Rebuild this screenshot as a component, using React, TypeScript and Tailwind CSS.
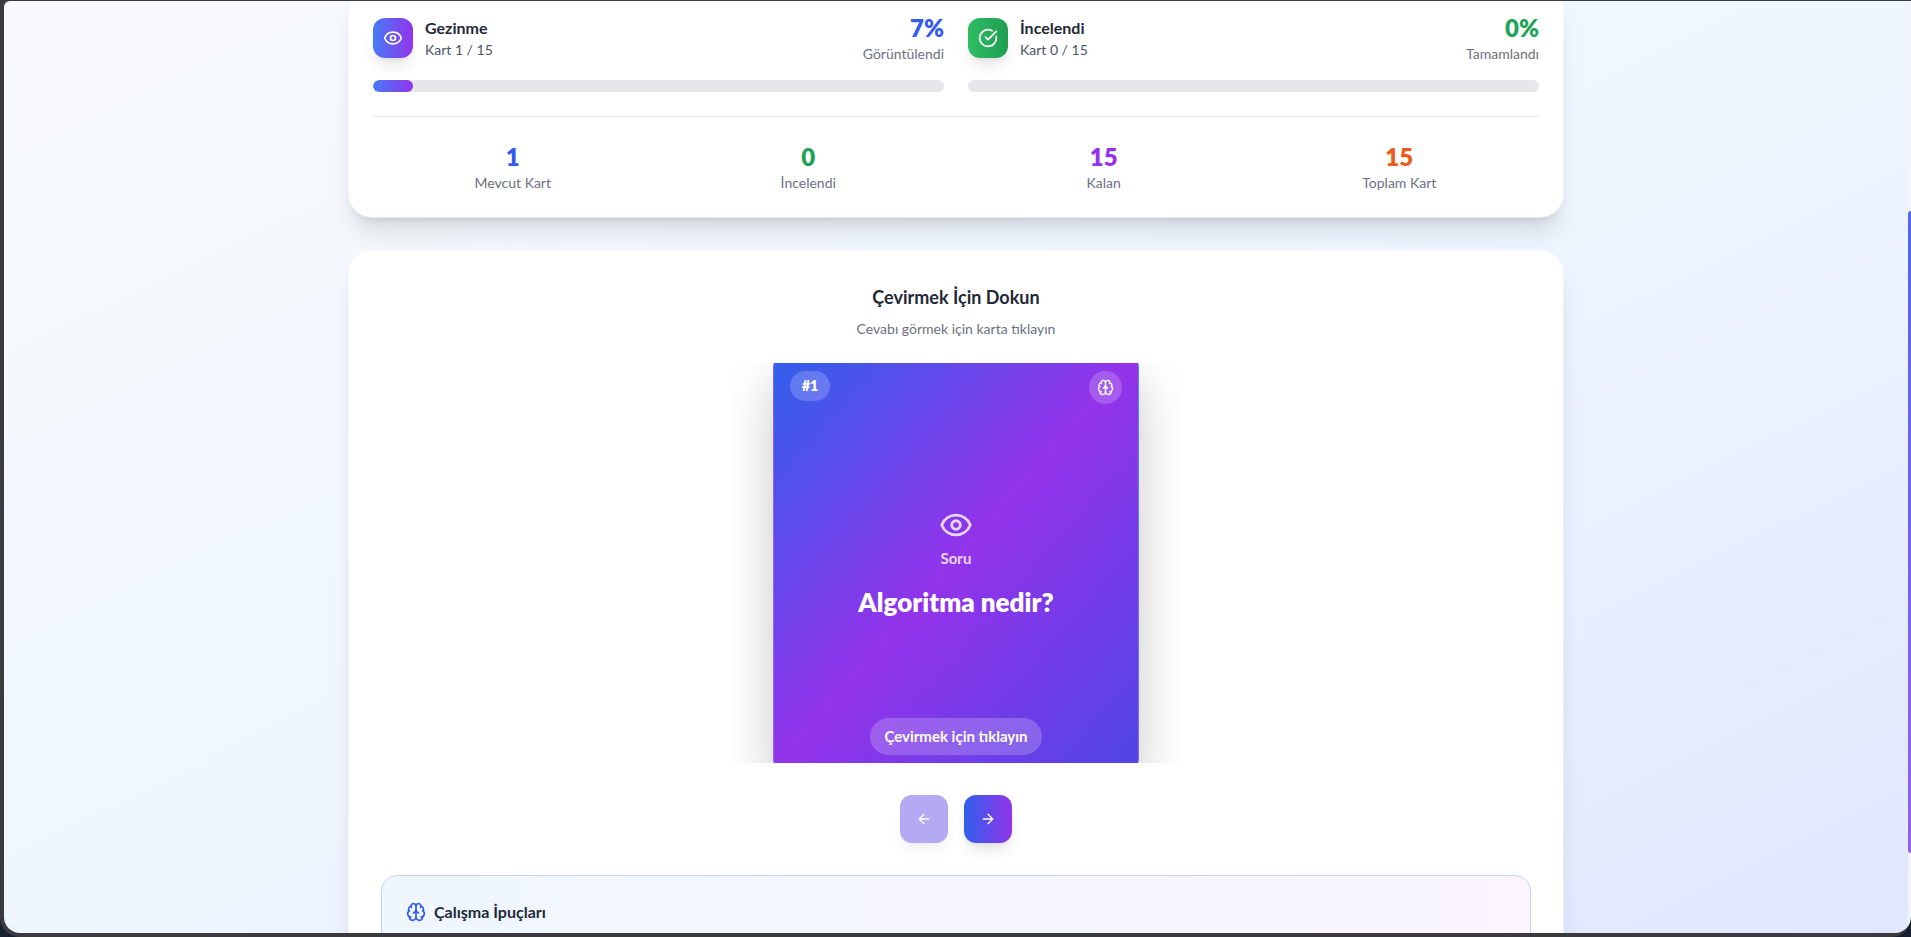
import { useState } from 'react'
import { ArrowLeft, ArrowRight, Brain, CircleCheckBig, Eye } from 'lucide-react'

const totalCards = 15

const progress = [
  {
    icon: Eye,
    title: 'Gezinme',
    current: 1,
    label: 'Görüntülendi',
    iconClass: 'bg-linear-to-r/srgb from-[#457bf5] to-[#9333ea]',
    barClass: 'bg-linear-to-r/srgb from-[#457bf5] to-[#9333ea]',
    valueClass: 'text-[#345bee]'
  },
  {
    icon: CircleCheckBig,
    title: 'İncelendi',
    current: 0,
    label: 'Tamamlandı',
    iconClass: 'bg-linear-to-r/srgb from-[#2ebd63] to-[#1f9d52]',
    barClass: 'bg-linear-to-r/srgb from-[#2ebd63] to-[#1f9d52]',
    valueClass: 'text-[#1fa457]'
  }
]

const stats = [
  { value: 1, name: 'Mevcut Kart', color: 'text-[#345bee]' },
  { value: 0, name: 'İncelendi', color: 'text-[#1fa457]' },
  { value: 15, name: 'Kalan', color: 'text-[#9333ea]' },
  { value: 15, name: 'Toplam Kart', color: 'text-[#ea5c1c]' }
]

function ProgressCard() {
  return (
    <section className="rounded-3xl border border-white/50 bg-white bg-clip-padding p-6 shadow-xl">
      <div className="grid grid-cols-2 gap-6">
        {progress.map(item => {
          const percent = Math.round((item.current / totalCards) * 100)
          return (
            <div key={item.title}>
              <div className="mb-4 flex items-center justify-between">
                <div className="flex items-center gap-3">
                  <div className={`flex h-10 w-10 items-center justify-center rounded-xl text-white shadow-lg ${item.iconClass}`}>
                    <item.icon size={20} />
                  </div>
                  <div>
                    <h3 className="font-bold text-[#1f2937]">{item.title}</h3>
                    <p className="text-sm text-[#4b5563]">Kart {item.current} / {totalCards}</p>
                  </div>
                </div>
                <div className="text-right">
                  <div className={`text-2xl font-extrabold ${item.valueClass}`}>{percent}%</div>
                  <div className="text-sm text-[#6b7280]">{item.label}</div>
                </div>
              </div>
              <div className="h-3 overflow-hidden rounded-full bg-[#e5e7eb]">
                <div className={`h-full rounded-full ${item.barClass}`} style={{ width: `${percent}%` }} />
              </div>
            </div>
          )
        })}
      </div>

      <div className="mt-6 grid grid-cols-4 gap-4 border-t border-[#e5e7eb] pt-6 text-center">
        {stats.map(stat => (
          <div key={stat.name}>
            <div className={`text-2xl font-extrabold ${stat.color}`}>{stat.value}</div>
            <div className="text-sm text-[#6b7280]">{stat.name}</div>
          </div>
        ))}
      </div>
    </section>
  )
}

function FlipCard({ onFlip }: { onFlip: () => void }) {
  return (
    <div className="mx-auto mt-6 flex h-[400px] w-full max-w-md items-center justify-center overflow-hidden">
      <button
        type="button"
        onClick={onFlip}
        className="flex h-[416px] w-[366px] shrink-0 rounded-xl bg-linear-to-bl/srgb from-[#4f86f7] via-[#8a5ff0] to-[#9a5cf0] px-px text-white shadow-[0_25px_50px_rgba(0,0,0,0.22)]"
      >
        <span className="relative flex h-full w-full flex-col items-center justify-center rounded-xl bg-linear-to-br/srgb from-[#2f60eb] via-[#9333ea] to-[#4f46e5]">
          <span className="absolute top-4 left-4 rounded-full bg-white/20 px-3 py-1 text-sm leading-[22px] font-extrabold">#1</span>
          <span className="absolute top-4 right-4 rounded-full bg-white/20 p-2">
            <Brain size={17} />
          </span>
          <Eye size={34} className="text-white/80" />
          <span className="mt-1 text-[15px] leading-6 font-bold text-white/80">Soru</span>
          <span className="mt-4 text-[26px] leading-8 font-extrabold">Algoritma nedir?</span>
          <span className="absolute bottom-4 rounded-full bg-white/20 px-3.5 py-2 text-[15px] leading-[21px] font-bold">
            Çevirmek için tıklayın
          </span>
        </span>
      </button>
    </div>
  )
}

export default function App() {
  const [flipped, setFlipped] = useState(false)

  return (
    <div className="h-screen overflow-hidden bg-[#17202f] font-['Lato','Noto_Sans',sans-serif]">
      <div className="h-full overflow-hidden rounded-bl-[20px] rounded-br-[20px] bg-[#3b3b3f] pt-px pb-1 pl-1">
        <div className="flex h-full overflow-hidden rounded-tl-md rounded-b-2xl">
          <main className="h-full min-w-0 flex-1 overflow-hidden bg-linear-to-br/srgb from-[#f8fafc] via-[#eff6ff] to-[#e0e7ff]">
            <div className="mx-auto -mt-[14px] max-w-7xl space-y-8 px-8">
              <ProgressCard />

              <section className="rounded-3xl border border-white/50 bg-white bg-clip-padding p-8 text-center shadow-xl">
                <h3 className="text-lg leading-7 font-bold text-[#1f2937]">Çevirmek İçin Dokun</h3>
                <p className="mt-2 text-sm text-[#6b7280]">Cevabı görmek için karta tıklayın</p>

                <FlipCard onFlip={() => setFlipped(!flipped)} />

                <div className="mt-8 flex justify-center gap-4 text-white">
                  <button
                    type="button"
                    disabled
                    aria-label="Önceki kart"
                    className="flex h-12 w-12 items-center justify-center rounded-xl bg-[#b4a9f3] shadow-lg shadow-black/5"
                  >
                    <ArrowLeft size={16} />
                  </button>
                  <button
                    type="button"
                    aria-label="Sonraki kart"
                    className="flex h-12 w-12 items-center justify-center rounded-xl bg-linear-to-r/srgb from-[#2f60eb] to-[#9333ea] shadow-lg"
                  >
                    <ArrowRight size={16} />
                  </button>
                </div>

                <div className="mt-8 rounded-2xl border border-[#c3d3f5] bg-linear-to-r/srgb from-[#eff6ff] to-[#faf5ff] p-6 text-left">
                  <h4 className="flex items-center gap-2 font-bold text-[#1f2937]">
                    <Brain size={20} className="text-[#345bee]" />
                    Çalışma İpuçları
                  </h4>
                </div>
              </section>
            </div>
          </main>

          <div className="grid w-[3px] grid-rows-[210fr_642fr_80fr] bg-[#f1f5f9]">
            <div className="row-start-2 rounded-l-full bg-linear-to-b/srgb from-[#5468ea] to-[#9560e6]" />
          </div>
        </div>
      </div>
    </div>
  )
}
